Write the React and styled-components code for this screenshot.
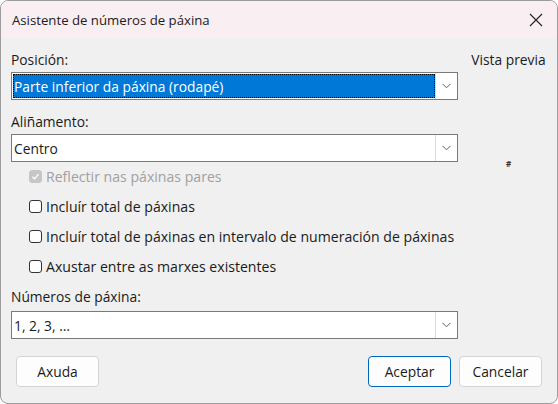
import React from "react";
import styled, { createGlobalStyle } from "styled-components";

const GlobalStyle = createGlobalStyle`
  html, body {
    margin: 0;
    padding: 0;
    background: #ffffff;
  }
  body {
    font-family: "Open Sans", "Noto Sans", sans-serif;
    color: #1b1b1b;
  }
`;

const Window = styled.div`
  width: 558px;
  height: 404px;
  box-sizing: border-box;
  border: 1px solid #9c9c9c;
  border-radius: 8px;
  overflow: hidden;
  background: #f0f0f0;
  display: flex;
  flex-direction: column;
`;

const TitleBar = styled.div`
  height: 37px;
  flex-shrink: 0;
  background: #f9eef2;
  display: flex;
  align-items: center;
  justify-content: space-between;
  padding: 0 14px 0 11px;
  font-size: 13.2px;
`;

const CloseButton = styled.svg`
  width: 14px;
  height: 14px;
`;

const Body = styled.div`
  flex: 1;
  display: flex;
  flex-direction: column;
  padding: 12px 10px 0 10px;
`;

const Main = styled.div`
  display: flex;
  gap: 12px;
`;

const Form = styled.div`
  width: 447px;
  display: flex;
  flex-direction: column;
`;

const Label = styled.div`
  font-size: 13.8px;
  height: 19px;
  line-height: 19px;
  margin-bottom: ${(p) => p.gap || 3}px;
`;

const Select = styled.div`
  height: 28px;
  box-sizing: border-box;
  border: 1px solid #7a7a7a;
  background: #ffffff;
  display: flex;
  margin-bottom: ${(p) => p.after || 0}px;
`;

const SelectValue = styled.div`
  flex: 1;
  display: flex;
  align-items: center;
  padding-left: 2px;
  font-size: 13.8px;
  box-sizing: border-box;
  ${(p) =>
    p.focused &&
    `
    background: #0078d7;
    color: #ffffff;
    margin: 1px 0 1px 1px;
    padding-left: 1px;
    outline: 1px dotted #000000;
    outline-offset: -1px;
  `}
`;

const DropButton = styled.div`
  width: 21px;
  border-left: 1px solid #d9d9d9;
  display: flex;
  align-items: center;
  justify-content: center;
`;

const Chevron = () => (
  <svg width="9" height="6" viewBox="0 0 9 6">
    <path d="M0.5 0.8 L4.5 4.8 L8.5 0.8" fill="none" stroke="#606060" strokeWidth="1" />
  </svg>
);

const CheckList = styled.div`
  display: flex;
  flex-direction: column;
  gap: 11px;
  padding: 5px 0 11px 18px;
`;

const CheckRow = styled.label`
  display: flex;
  align-items: center;
  gap: 4px;
  height: 19px;
  font-size: 14.1px;
  color: ${(p) => (p.disabled ? "#a0a0a0" : "#1b1b1b")};
`;

const Box = styled.span`
  width: 11px;
  height: 11px;
  border: 1px solid ${(p) => (p.disabled ? "#c6c6c6" : "#333333")};
  background: ${(p) => (p.disabled ? "#c6c6c6" : "#ffffff")};
  border-radius: 3px;
  display: flex;
  align-items: center;
  justify-content: center;
  flex-shrink: 0;
`;

const Preview = styled.div`
  flex: 1;
  display: flex;
  flex-direction: column;
  align-items: center;
  font-size: 13.8px;
`;

const PreviewTitle = styled.div`
  height: 19px;
  line-height: 19px;
`;

const PreviewMark = styled.div`
  margin-top: 89px;
  font-size: 8px;
  font-weight: bold;
  color: #333;
`;

const Footer = styled.div`
  display: flex;
  align-items: center;
  gap: 8px;
  padding: 17px 5px 0 5px;
`;

const Button = styled.button`
  width: 83px;
  height: 31px;
  box-sizing: border-box;
  background: #fdfdfd;
  border: 1px solid ${(p) => (p.primary ? "#0067c0" : "#d4d4d4")};
  border-radius: 4px;
  font-family: inherit;
  font-size: 13.8px;
  color: #1b1b1b;
  margin-right: ${(p) => (p.push ? "auto" : "0")};
`;

function Check({ children, checked, disabled }) {
  return (
    <CheckRow disabled={disabled}>
      <Box disabled={disabled}>
        {checked && (
          <svg width="9" height="9" viewBox="0 0 9 9">
            <path d="M1.5 4.8 L3.6 6.8 L7.5 2.2" fill="none" stroke="#ffffff" strokeWidth="1.3" />
          </svg>
        )}
      </Box>
      {children}
    </CheckRow>
  );
}

export default function App() {
  return (
    <>
      <GlobalStyle />
      <Window>
        <TitleBar>
          <span>Asistente de números de páxina</span>
          <CloseButton viewBox="0 0 14 14">
            <path d="M1 1 L13 13 M13 1 L1 13" stroke="#222" strokeWidth="1.1" />
          </CloseButton>
        </TitleBar>
        <Body>
          <Main>
            <Form>
              <Label>Posición:</Label>
              <Select after={12}>
                <SelectValue focused>Parte inferior da páxina (rodapé)</SelectValue>
                <DropButton>
                  <Chevron />
                </DropButton>
              </Select>
              <Label>Aliñamento:</Label>
              <Select>
                <SelectValue>Centro</SelectValue>
                <DropButton>
                  <Chevron />
                </DropButton>
              </Select>
              <CheckList>
                <Check checked disabled>Reflectir nas páxinas pares</Check>
                <Check>Incluír total de páxinas</Check>
                <Check>Incluír total de páxinas en intervalo de numeración de páxinas</Check>
                <Check>Axustar entre as marxes existentes</Check>
              </CheckList>
              <Label gap={5}>Números de páxina:</Label>
              <Select>
                <SelectValue>1, 2, 3, …</SelectValue>
                <DropButton>
                  <Chevron />
                </DropButton>
              </Select>
            </Form>
            <Preview>
              <PreviewTitle>Vista previa</PreviewTitle>
              <PreviewMark>#</PreviewMark>
            </Preview>
          </Main>
          <Footer>
            <Button push>Axuda</Button>
            <Button primary>Aceptar</Button>
            <Button>Cancelar</Button>
          </Footer>
        </Body>
      </Window>
    </>
  );
}
